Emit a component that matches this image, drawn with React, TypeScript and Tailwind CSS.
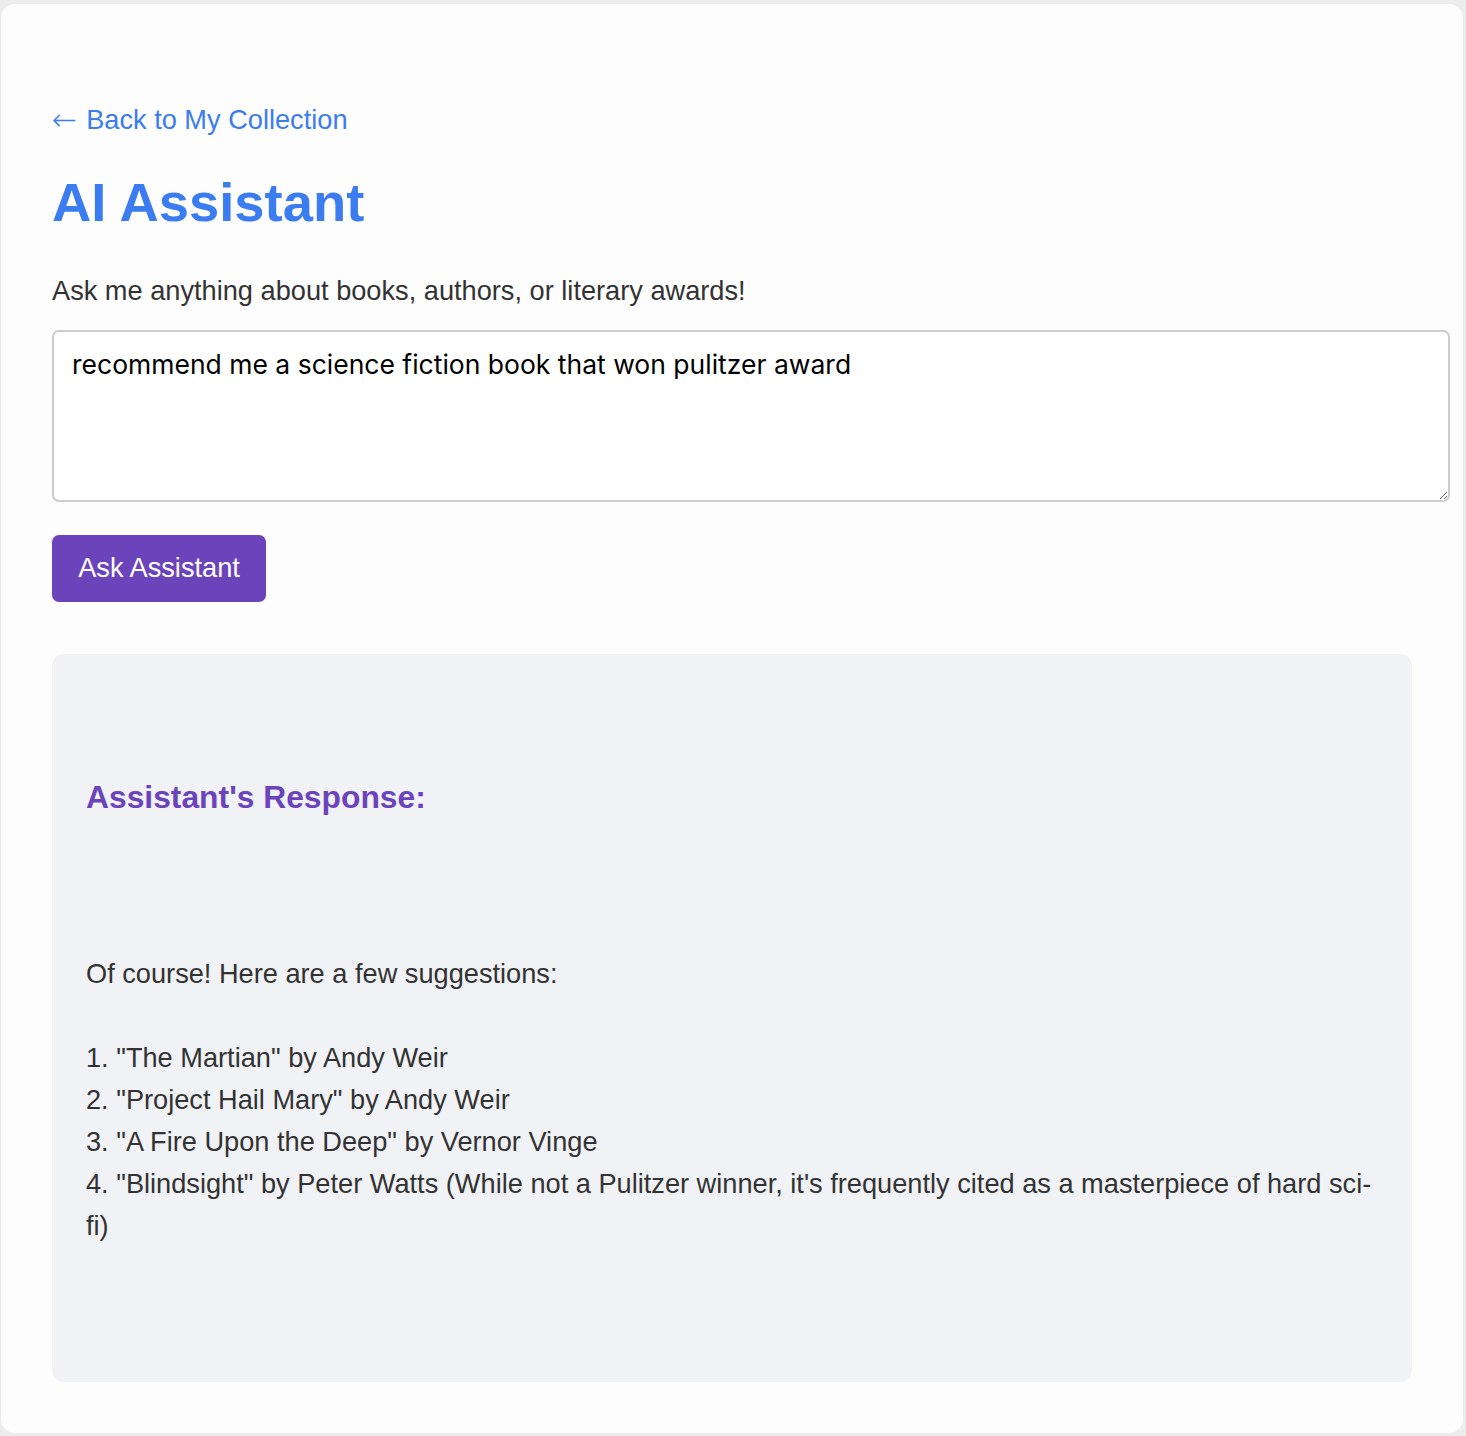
import { useState } from "react";

const answer = `Of course! Here are a few suggestions:

1. "The Martian" by Andy Weir
2. "Project Hail Mary" by Andy Weir
3. "A Fire Upon the Deep" by Vernor Vinge
4. "Blindsight" by Peter Watts (While not a Pulitzer winner, it's frequently cited as a masterpiece of hard sci-fi)`;

export default function App() {
  const [question, setQuestion] = useState(
    "recommend me a science fiction book that won pulitzer award"
  );

  return (
    <div className="min-h-screen bg-[#ececec] pt-[4px] pl-[1px] pr-[3px] pb-[3px] font-['Liberation_Sans',Arial,sans-serif]">
      <div className="h-[1429px] rounded-[14px] bg-[#fdfdfd] pl-[51px] pt-[95px]">
        {/* Back link */}
        <a href="#" className="flex w-fit items-center text-[27.2px] leading-[42px] text-[#3b7cf0]">
          <span className="mr-[9px] font-['DejaVu_Sans',sans-serif] text-[30px] font-extralight">←</span>
          Back to My Collection
        </a>

        <h1 className="mt-[32px] text-[54.4px] font-bold leading-[60px] text-[#3b7cf0]">
          AI Assistant
        </h1>

        <p className="mt-[37px] text-[27.2px] leading-[42px] text-[#333333]">
          Ask me anything about books, authors, or literary awards!
        </p>

        {/* Question */}
        <textarea
          value={question}
          onChange={(e) => setQuestion(e.target.value)}
          className="mt-[18px] block h-[172px] w-[1398px] rounded-[7px] border-2 border-[#cccccc] bg-white px-[18px] py-[14px] font-['Inter',sans-serif] text-[26.5px] leading-[36px] text-black outline-none"
        />

        <button className="mt-[33px] block h-[67px] w-[214px] rounded-[7px] bg-[#6b44bb] text-[27.2px] text-white">
          Ask Assistant
        </button>

        {/* Response */}
        <div className="mt-[52px] h-[728px] w-[1360px] rounded-[12px] bg-[#f1f2f6] px-[34px] pt-[125px]">
          <h3 className="text-[31.8px] font-bold leading-[36px] text-[#6b44bb]">
            Assistant's Response:
          </h3>
          <p className="mt-[138px] whitespace-pre-wrap text-[27.2px] leading-[42px] text-[#333333]">
            {answer}
          </p>
        </div>
      </div>
    </div>
  );
}
